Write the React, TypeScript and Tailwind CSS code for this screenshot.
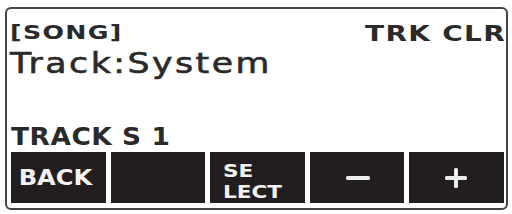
import React from "react";

const font = { fontFamily: '"DejaVu Sans", "Liberation Sans", sans-serif' };

function Cell({ children }: { children?: React.ReactNode }) {
  return (
    <div className="flex-1 bg-[#221e1f] flex items-center justify-center text-[#f2f2f2]">
      {children}
    </div>
  );
}

export default function App() {
  return (
    <div className="w-[512px] h-[214px] bg-white overflow-hidden" style={font}>
      <div className="ml-[5px] mt-[7px] w-[503px] h-[203px] border-2 border-[#444] rounded-[6px] flex flex-col text-[#2a2a2a]">
        <div className="mt-[14px] pl-[3px] flex justify-between items-end">
          <span className="inline-block origin-left scale-x-[1.33] text-[19px] leading-[19px] font-bold tracking-[1px] mb-[3px]">
            [SONG]
          </span>
          <span className="inline-block origin-right scale-x-[1.33] text-[21px] leading-[21px] font-bold tracking-[1px]">
            TRK CLR
          </span>
        </div>
        <div className="mt-[5px] pl-[3px]">
          <span className="inline-block origin-left scale-x-[1.24] text-[28px] leading-[28px] tracking-[2px] [-webkit-text-stroke:0.6px_#2a2a2a]">
            Track:System
          </span>
        </div>
        <div className="mt-auto pl-[4px]">
          <span className="inline-block origin-left scale-x-[1.1] text-[24px] leading-[20px] font-bold tracking-[0.5px]">
            TRACK S 1
          </span>
        </div>
        <div className="h-[51px] mb-[5px] pl-[4px] pr-[2px] flex gap-[5px]">
          <Cell>
            <span className="inline-block scale-x-[1.1] text-[22px] leading-[22px] font-bold mr-[6px]">BACK</span>
          </Cell>
          <Cell />
          <Cell>
            <div className="flex flex-col items-start mr-[20px] mt-[6px] font-bold text-[18px]">
              <span className="inline-block origin-left scale-x-[1.2] leading-[21px]">SE</span>
              <span className="inline-block origin-left scale-x-[1.2] leading-[21px]">LECT</span>
            </div>
          </Cell>
          <Cell>
            <svg width="24" height="6" viewBox="0 0 24 6" className="ml-[2px]">
              <rect x="0" y="1" width="24" height="4" rx="1.5" fill="#eeeeee" />
            </svg>
          </Cell>
          <Cell>
            <svg width="22" height="20" viewBox="0 0 22 20" className="mr-[2px]">
              <rect x="0" y="8" width="22" height="4" rx="1.5" fill="#eeeeee" />
              <rect x="9" y="0" width="4" height="20" rx="1.5" fill="#eeeeee" />
            </svg>
          </Cell>
        </div>
      </div>
    </div>
  );
}
